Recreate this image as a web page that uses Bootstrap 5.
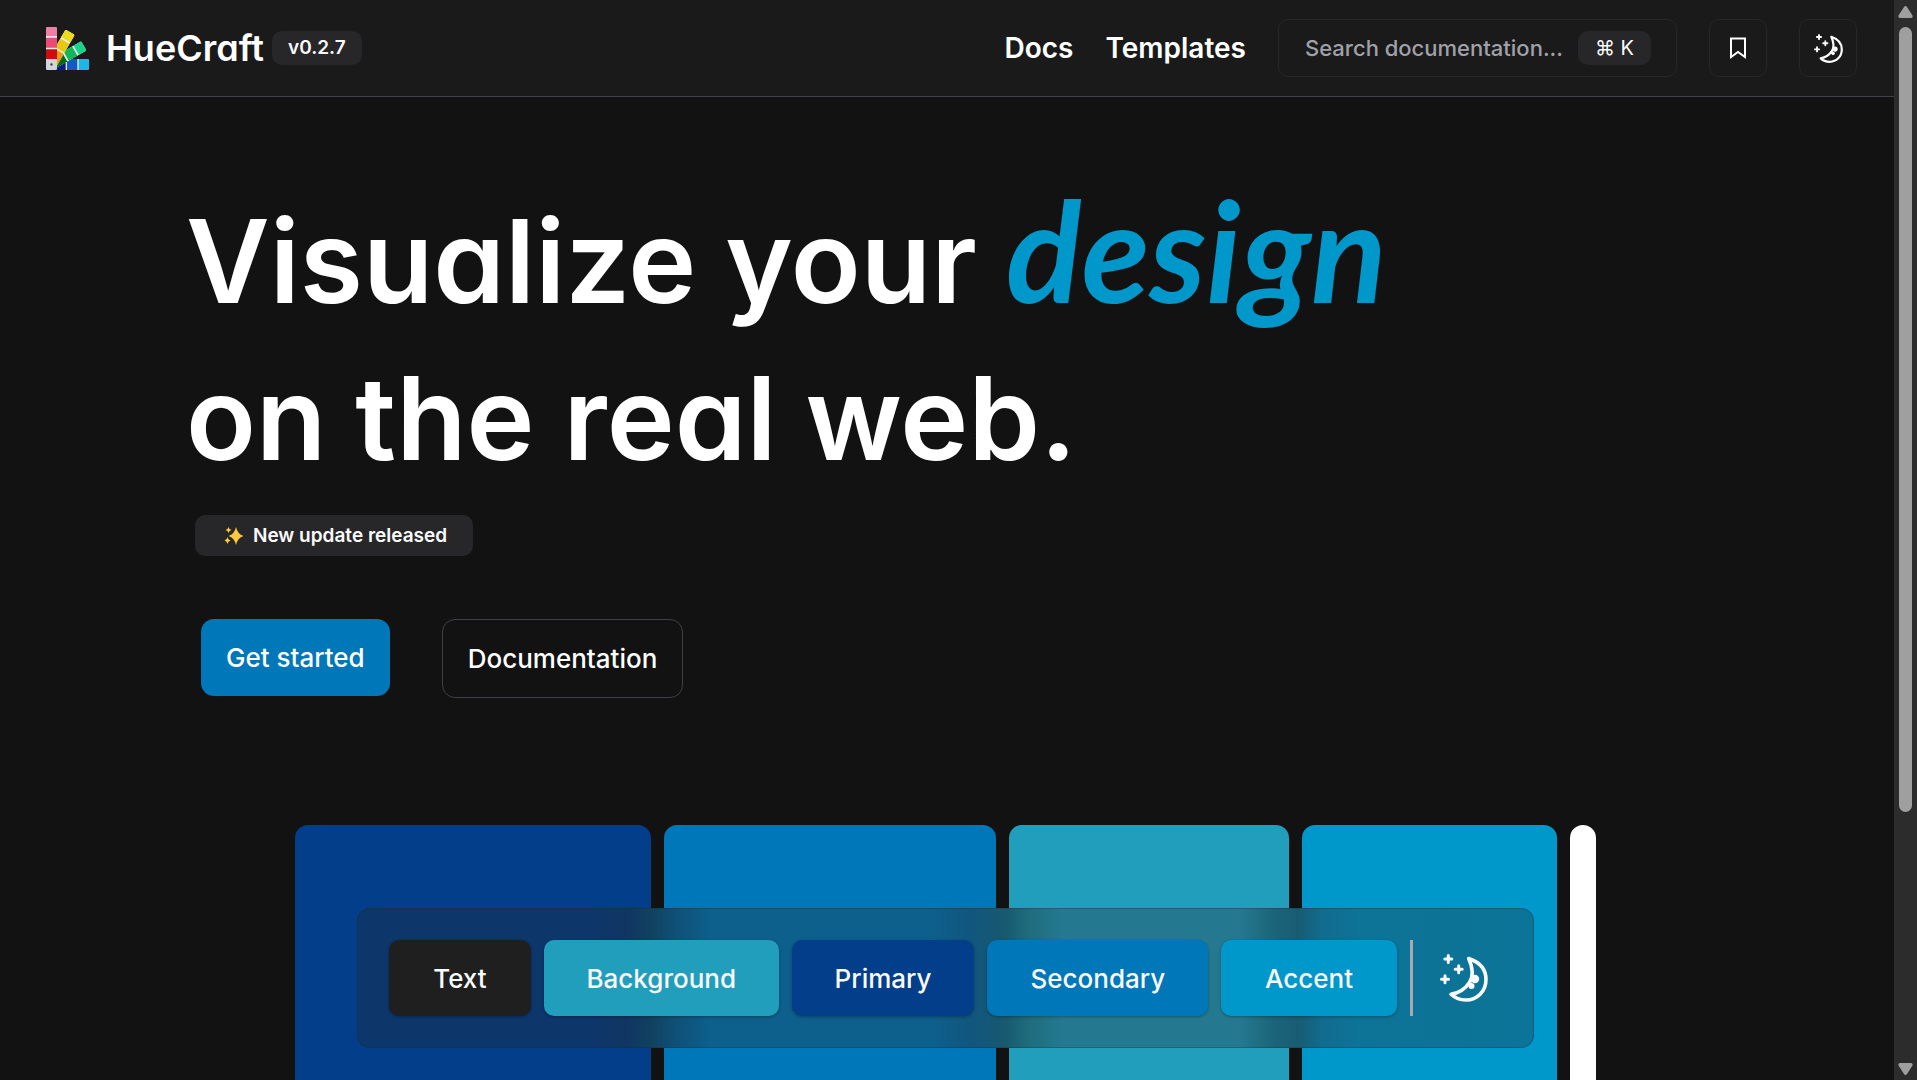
<!DOCTYPE html>
<html lang="en" data-bs-theme="dark">
<head>
<meta charset="utf-8">
<meta name="viewport" content="width=device-width, initial-scale=1">
<title>HueCraft</title>
<link href="https://cdn.jsdelivr.net/npm/bootstrap@5.3.0/dist/css/bootstrap.min.css" rel="stylesheet">
<style>
:root{--primary:#023e8a;--secondary:#0077b8;--background:#229ebd;--accent:#0097cb;--chip:#27272a}
body{background:#121212;color:#fff;font-family:Inter,"Liberation Sans",sans-serif}
.site-header{background:#1a1a1a;border-bottom:1px solid #3f3f46;padding:19px 37px 19px 46px}
.brand{gap:17px;color:#fff}
.brand-name{font-size:36px;line-height:40px;font-weight:600;font-feature-settings:"cv11"}
.chip{background:var(--chip);color:#fafafa;border-radius:10px;font-weight:600}
.chip-version{font-size:19px;line-height:34px;padding:0 16px}
.header-end{gap:32px}
.top-link{color:#fff;font-size:28px;line-height:32px;font-weight:600}
.search-box{width:399px;height:58px;border:1px solid #27272a;border-radius:10px;padding:0 25px 0 26px}
.search-box input{min-width:0;background:none;border:0;outline:0;padding:0;color:#fff;font-size:22px;font-weight:500}
.search-box input::placeholder{color:#a1a1aa;opacity:1}
.key-chip{font:400 20px/34px Inter,"DejaVu Sans",sans-serif;padding:0;width:73px;text-align:center}
.tool-btn{width:58px;height:58px;background:none;border:1px solid #27272a;border-radius:10px;color:#fff;padding:0}
.hero{padding:86px 186px 0}
.hero h1{font-size:115px;line-height:157px;font-weight:600;font-feature-settings:"cv11";margin:0 0 18px}
.script-word{font-family:Lato,sans-serif;font-size:140px;line-height:120px;font-style:italic;font-weight:700;color:var(--accent)}
.chip-update{font-size:19px;line-height:41px;padding:0 26px 0 29px;margin-left:9px;gap:9px}
.cta-row{margin:63px 0 0 15px;gap:52px}
.cta{font-size:26px;line-height:31px;font-weight:500;border-radius:13px;padding:23px 25px;color:#fff;border:0}
.cta-solid{background:var(--secondary)}
.cta-line{border:1px solid #3f3f46}
.showcase{margin-top:127px;padding:0 22px 0 19px}
.stage{max-width:1301px;position:relative}
.bars{gap:13px;height:420px}
.bar{border-radius:13px;flex-basis:0}
.bar-primary{background:var(--primary);flex-grow:357}
.bar-secondary{background:var(--secondary);flex-grow:332}
.bar-background{background:var(--background);flex-grow:281}
.bar-accent{background:var(--accent);flex-grow:255}
.bar-text{background:#fff;flex-grow:26}
.dock{position:absolute;top:83px;left:62px;right:62px;padding:31px;gap:13px;border:1px solid rgba(39,39,42,.3);border-radius:13px;background:linear-gradient(90deg,#0d366b 20%,#103662 23%,#11415f 25%,#0f5076 27%,#0d5f8c 30%,#0d5f8c 49%,#11567f 52%,#17596f 55%,#1f6c7c 57%,#247990 60%,#247990 75%,#1b6478 78%,#185c73 80%,#116c8e 82%,#0d7397 85%,#0c7498) border-box}
.swatch{height:76px;border:0;border-radius:10px;padding:0;color:#fafafa;font-size:26px;font-weight:500;flex-basis:0;box-shadow:0 1px 3px rgba(0,0,0,.3)}
.swatch-text{background:#1f1f1f;flex-grow:142}
.swatch-background{background:var(--background);flex-grow:235}
.swatch-primary{background:var(--primary);flex-grow:183}
.swatch-secondary{background:var(--secondary);flex-grow:221}
.swatch-accent{background:var(--accent);flex-grow:176}
.divider{width:3px;background:#a9a9b0}
.dock-mode{width:76px;background:none;border:0;color:#fafafa;padding:0}
.scroll-rail{width:23px;background:#2c2c2c;padding:6px 0 5px}
.scroll-lane{margin:9px 0 10px}
.scroll-thumb{width:13px;flex:785 0 0;background:#9f9f9f;border-radius:7px}
.scroll-rest{flex:241 0 0}
</style>
</head>
<body>
<svg class="d-none">
<symbol id="moon" viewBox="0 0 48 48"><g fill="none" stroke="currentColor" stroke-linecap="round" stroke-linejoin="round"><path stroke-width="3" d="M8.300 1.500v7M4.800 5h7M18.700 11.800v7M15.200 15.300h7M5 21.800v7M1.500 25.300h7"/><path stroke-width="3.600" d="M28.700 4.500C39 8 46 15 46 25.500C46 37.500 37 46 26 46C20 46 15 44 11 40.300C19 39 25.500 34.500 29.500 28.500C34 21.500 32 12 28.700 4.500Z"/></g><circle cx="35" cy="25" r="4.200" fill="currentColor"/><circle cx="31.500" cy="32" r="3" fill="currentColor"/></symbol>
</svg>
<div class="d-flex vh-100 overflow-hidden">
<div class="flex-grow-1 overflow-hidden">
<header class="site-header d-flex align-items-center justify-content-between">
<div class="d-flex align-items-center gap-2">
<a href="#" class="brand d-flex align-items-center text-decoration-none">
<svg width="43" height="43" viewBox="0 0 129 129" aria-hidden="true">
<defs><clipPath id="strip"><rect width="33" height="129" rx="6"/></clipPath></defs>
<g transform="rotate(90 16.500 112.500)"><g clip-path="url(#strip)"><path fill="#e8eaf0" d="M0 0h33v129H0z"/><path fill="#18b9e8" d="M0 0h33v31H0z"/><path fill="#1459c8" d="M0 35h33v31H0z"/><path fill="#0b1c86" d="M0 70h33v59H0z"/></g></g>
<g transform="rotate(60 16.500 112.500)"><g clip-path="url(#strip)"><path fill="#e8f0ea" d="M0 0h33v129H0z"/><path fill="#18d48c" d="M0 0h33v27H0z"/><path fill="#12b45c" d="M0 32h33v30H0z"/><path fill="#076a18" d="M0 67h33v62H0z"/></g></g>
<g transform="rotate(30 16.500 112.500)"><g clip-path="url(#strip)"><path fill="#f0eee0" d="M0 0h33v129H0z"/><path fill="#ecdb1c" d="M0 0h33v27H0z"/><path fill="#e6c913" d="M0 32h33v30H0z"/><path fill="#e99a10" d="M0 67h33v62H0z"/></g></g>
<g clip-path="url(#strip)"><path fill="#eee6ea" d="M0 0h33v129H0z"/><path fill="#f07fa5" d="M0 0h33v27H0z"/><path fill="#ea4a78" d="M0 32h33v30H0z"/><path fill="#cf0c10" d="M0 67h33v29H0z"/><path fill="#d2d4dc" d="M0 96h33v33H0z"/></g>
<circle cx="16.500" cy="112.500" r="3.500" fill="#333"/>
</svg>
<span class="brand-name">HueCraft</span></a>
<span class="chip chip-version">v0.2.7</span>
</div>
<div class="header-end d-flex align-items-center">
<nav class="header-end d-flex"><a class="top-link text-decoration-none" href="#">Docs</a><a class="top-link text-decoration-none" href="#">Templates</a></nav>
<div class="search-box d-flex align-items-center gap-2">
<input class="flex-grow-1" type="text" aria-label="Search documentation" placeholder="Search documentation...">
<kbd class="chip key-chip flex-shrink-0">⌘ K</kbd>
</div>
<button class="tool-btn d-flex align-items-center justify-content-center" type="button" aria-label="Bookmarks"><svg width="18" height="22" viewBox="0 0 18 22" fill="none" stroke="currentColor" stroke-width="2"><path d="M2 1.500h14v18.500l-7-5-7 5z"/></svg></button>
<button class="tool-btn d-flex align-items-center justify-content-center" type="button" aria-label="Toggle theme"><svg width="29" height="29"><use href="#moon"/></svg></button>
</div>
</header>
<main>
<section class="hero">
<h1>Visualize your <span class="script-word">design</span><br>on the real web.</h1>
<div class="d-flex"><span class="chip chip-update d-flex align-items-center"><svg width="20" height="18" viewBox="0 0 20 18" fill="#ffc83d" aria-hidden="true"><path d="M12 0Q13.500 7 19.500 9Q13.500 11 12 18Q10.500 11 4.500 9Q10.500 7 12 0ZM4.500 0Q5 2.500 7.500 3Q5 3.500 4.500 6Q4 3.500 1.500 3Q4 2.500 4.500 0ZM3.500 10Q4 13 6.500 13.500Q4 14 3.500 17Q3 14 0.500 13.500Q3 13 3.500 10Z"/></svg>New update released</span></div>
<div class="cta-row d-flex align-items-start"><button class="btn cta cta-solid" type="button">Get started</button><a class="btn cta cta-line" href="#">Documentation</a></div>
</section>
<section class="showcase">
<div class="stage mx-auto">
<div class="bars d-flex"><div class="bar bar-primary"></div><div class="bar bar-secondary"></div><div class="bar bar-background"></div><div class="bar bar-accent"></div><div class="bar bar-text"></div></div>
<div class="dock d-flex">
<button class="swatch swatch-text" type="button">Text</button>
<button class="swatch swatch-background" type="button">Background</button>
<button class="swatch swatch-primary" type="button">Primary</button>
<button class="swatch swatch-secondary" type="button">Secondary</button>
<button class="swatch swatch-accent" type="button">Accent</button>
<span class="divider"></span>
<button class="dock-mode d-flex align-items-center justify-content-center" type="button" aria-label="Toggle palette theme"><svg width="48" height="48"><use href="#moon"/></svg></button>
</div>
</div>
</section>
</main>
</div>
<div class="scroll-rail d-flex flex-column align-items-center flex-shrink-0" aria-hidden="true">
<svg width="15" height="12" viewBox="0 0 15 12" fill="#9f9f9f"><path d="M7.500 0Q8.500 0 9 1L14.500 9.500Q15 12 13 12H2Q0 12 .500 9.500L6 1Q6.500 0 7.500 0Z"/></svg>
<div class="scroll-lane flex-grow-1 d-flex flex-column"><div class="scroll-thumb"></div><div class="scroll-rest"></div></div>
<svg width="15" height="12" viewBox="0 0 15 12" fill="#9f9f9f"><path d="M7.500 12Q8.500 12 9 11L14.500 2.500Q15 0 13 0H2Q0 0 .500 2.500L6 11Q6.500 12 7.500 12Z"/></svg>
</div>
</div>
<script src="https://cdn.jsdelivr.net/npm/bootstrap@5.3.0/dist/js/bootstrap.bundle.min.js"></script>
</body>
</html>
